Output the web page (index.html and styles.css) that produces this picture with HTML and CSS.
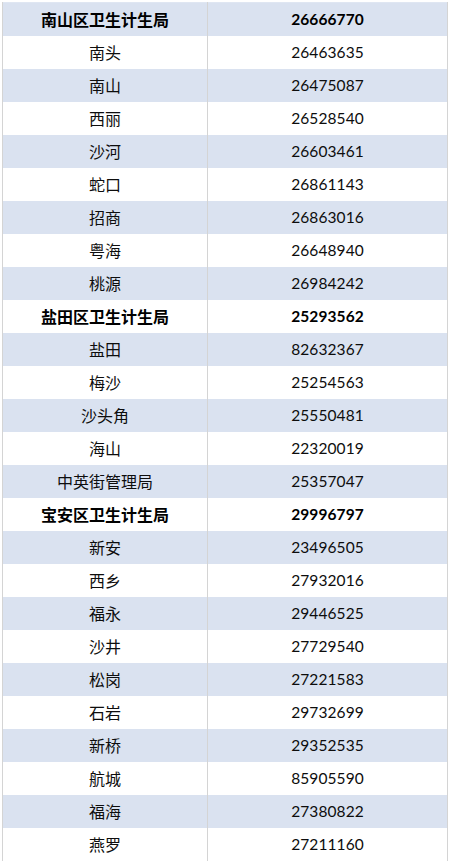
FILE: index.html
```html
<!DOCTYPE html>
<html lang="zh">
<head>
<meta charset="utf-8">
<link rel="stylesheet" href="styles.css">
</head>
<body>
<table class="tbl">
<tbody>
<tr class="b head"><td>南山区卫生计生局</td><td class="num">26666770</td></tr>
<tr class="w"><td>南头</td><td class="num">26463635</td></tr>
<tr class="b"><td>南山</td><td class="num">26475087</td></tr>
<tr class="w"><td>西丽</td><td class="num">26528540</td></tr>
<tr class="b"><td>沙河</td><td class="num">26603461</td></tr>
<tr class="w"><td>蛇口</td><td class="num">26861143</td></tr>
<tr class="b"><td>招商</td><td class="num">26863016</td></tr>
<tr class="w"><td>粤海</td><td class="num">26648940</td></tr>
<tr class="b"><td>桃源</td><td class="num">26984242</td></tr>
<tr class="w head"><td>盐田区卫生计生局</td><td class="num">25293562</td></tr>
<tr class="b"><td>盐田</td><td class="num">82632367</td></tr>
<tr class="w"><td>梅沙</td><td class="num">25254563</td></tr>
<tr class="b"><td>沙头角</td><td class="num">25550481</td></tr>
<tr class="w"><td>海山</td><td class="num">22320019</td></tr>
<tr class="b"><td>中英街管理局</td><td class="num">25357047</td></tr>
<tr class="w head"><td>宝安区卫生计生局</td><td class="num">29996797</td></tr>
<tr class="b"><td>新安</td><td class="num">23496505</td></tr>
<tr class="w"><td>西乡</td><td class="num">27932016</td></tr>
<tr class="b"><td>福永</td><td class="num">29446525</td></tr>
<tr class="w"><td>沙井</td><td class="num">27729540</td></tr>
<tr class="b"><td>松岗</td><td class="num">27221583</td></tr>
<tr class="w"><td>石岩</td><td class="num">29732699</td></tr>
<tr class="b"><td>新桥</td><td class="num">29352535</td></tr>
<tr class="w"><td>航城</td><td class="num">85905590</td></tr>
<tr class="b"><td>福海</td><td class="num">27380822</td></tr>
<tr class="w"><td>燕罗</td><td class="num">27211160</td></tr>
</tbody>
</table>
</body>
</html>
```

FILE: styles.css
```css
html, body {
  margin: 0;
  padding: 0;
  background: #ffffff;
}

body {
  padding: 2px 0 0 2px;
  font-family: "Noto Sans CJK SC", "Noto Sans", sans-serif;
  color: #0d0d0d;
}

.tbl {
  border-collapse: collapse;
  width: 446px;
  table-layout: fixed;
  border-top: 1px solid #dfe6f2;
}

.tbl td {
  height: 33px;
  padding: 0;
  box-sizing: border-box;
  text-align: center;
  vertical-align: middle;
  font-size: 16px;
  line-height: 20px;
  border-left: 1px solid #d4d4d4;
  border-right: 1px solid #d4d4d4;
}

.tbl td:first-child {
  width: 205px;
}

.tbl .num {
  font-family: "Lato", "Noto Sans", sans-serif;
  font-size: 15.5px;
  letter-spacing: 0.1px;
}

.b td {
  background: #dae2f0;
}

.w td {
  background: #ffffff;
}

.head td {
  font-weight: bold;
  color: #000000;
}

.head .num {
  font-weight: bold;
}
```
